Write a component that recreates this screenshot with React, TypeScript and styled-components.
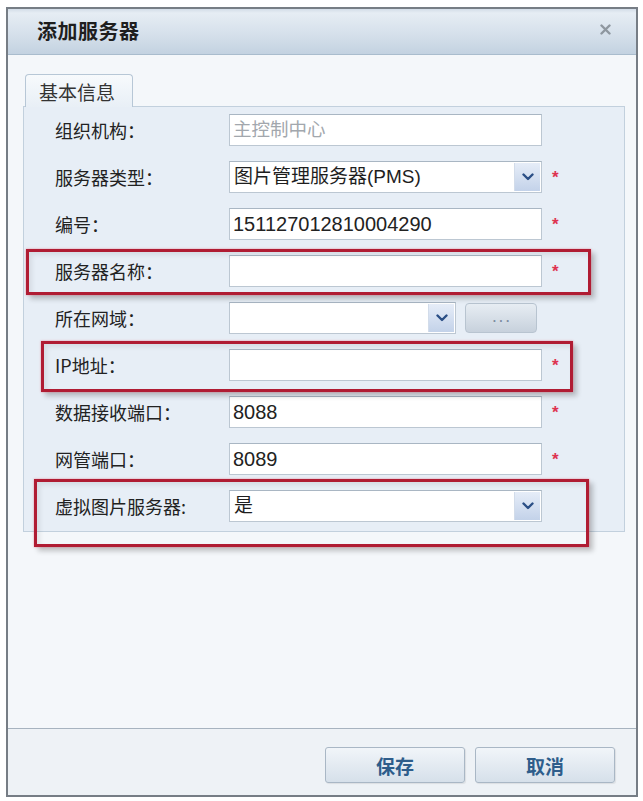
import React from 'react';
import styled, { createGlobalStyle } from 'styled-components';

const GlobalStyle = createGlobalStyle`
  html, body {
    margin: 0;
    padding: 0;
    background: #ffffff;
  }
  body {
    font-family: "Noto Sans CJK SC", "Liberation Sans", sans-serif;
  }
`;

type FieldRow = {
  label: string;
  kind: 'text' | 'select' | 'domain';
  value?: string;
  muted?: boolean;
  required?: boolean;
};

const rows: FieldRow[] = [
  { label: '组织机构：', kind: 'text', value: '主控制中心', muted: true },
  { label: '服务器类型：', kind: 'select', value: '图片管理服务器(PMS)', required: true },
  { label: '编号：', kind: 'text', value: '151127012810004290', required: true },
  { label: '服务器名称：', kind: 'text', value: '', required: true },
  { label: '所在网域：', kind: 'domain', value: '' },
  { label: 'IP地址：', kind: 'text', value: '', required: true },
  { label: '数据接收端口：', kind: 'text', value: '8088', required: true },
  { label: '网管端口：', kind: 'text', value: '8089', required: true },
  { label: '虚拟图片服务器:', kind: 'select', value: '是' },
];

// 红色标注框（相对对话框定位）
const marks = [
  { left: 18, top: 240, width: 565, height: 46 },
  { left: 33, top: 332, width: 532, height: 51 },
  { left: 26, top: 470, width: 555, height: 68 },
];

const Chevron = () => (
  <svg width="12" height="8" viewBox="0 0 12 8">
    <path d="M1.5 1.5 L6 6 L10.5 1.5" fill="none" stroke="#2b4f86" strokeWidth="2.4" strokeLinecap="round" strokeLinejoin="round" />
  </svg>
);

const CloseIcon = () => (
  <svg width="11" height="11" viewBox="0 0 11 11">
    <path d="M1.5 1.5 L9.5 9.5 M9.5 1.5 L1.5 9.5" stroke="#8e979f" strokeWidth="2.4" strokeLinecap="round" />
  </svg>
);

const App: React.FC = () => {
  return (
    <>
      <GlobalStyle />
      <Dialog>
        <TitleBar>
          <Title>添加服务器</Title>
          <CloseButton>
            <CloseIcon />
          </CloseButton>
        </TitleBar>

        <Body>
          <Tab>基本信息</Tab>
          <Panel>
            {rows.map((row) => (
              <Row key={row.label}>
                <Label>{row.label}</Label>
                {row.kind === 'text' && (
                  <Input muted={row.muted}>{row.value}</Input>
                )}
                {row.kind === 'select' && (
                  <Select width={313}>
                    <SelectValue>{row.value}</SelectValue>
                    <ArrowBox>
                      <Chevron />
                    </ArrowBox>
                  </Select>
                )}
                {row.kind === 'domain' && (
                  <>
                    <Select width={227}>
                      <SelectValue />
                      <ArrowBox>
                        <Chevron />
                      </ArrowBox>
                    </Select>
                    <MoreButton>. . .</MoreButton>
                  </>
                )}
                {row.required && <Star>*</Star>}
              </Row>
            ))}
          </Panel>
        </Body>

        <Footer>
          <Button>保存</Button>
          <Button>取消</Button>
        </Footer>

        {marks.map((m, i) => (
          <Mark
            key={i}
            style={{ left: m.left, top: m.top, width: m.width, height: m.height }}
          />
        ))}
      </Dialog>
    </>
  );
};

export default App;

// styled-components
const Dialog = styled.div`
  position: relative;
  box-sizing: border-box;
  margin: 7px 5px 0 6px;
  height: 790px;
  border: 2px solid #767d85;
  background: #f4f7fa;
  display: flex;
  flex-direction: column;
`;

const TitleBar = styled.div`
  box-sizing: border-box;
  height: 46px;
  flex: none;
  display: flex;
  align-items: center;
  justify-content: space-between;
  padding: 0 24px 2px 29px;
  background: linear-gradient(#d3dde8 0px, #e6edf4 4px, #d4dfea 60%, #c3d2e1 100%);
  border-bottom: 1px solid #a9bccd;
`;

const Title = styled.div`
  font-size: 20px;
  font-weight: 700;
  color: #1e1e1e;
  letter-spacing: 0.5px;
`;

const CloseButton = styled.div`
  display: flex;
  align-items: center;
  justify-content: center;
  width: 14px;
  height: 14px;
  margin-top: -2px;
`;

const Body = styled.div`
  flex: 1;
  padding: 19px 11px 0 15px;
  display: flex;
  flex-direction: column;
  align-items: flex-start;
`;

const Tab = styled.div`
  box-sizing: border-box;
  position: relative;
  z-index: 1;
  width: 108px;
  height: 33px;
  margin-left: 2px;
  margin-bottom: -1px;
  padding: 2px 0 0 13px;
  border: 1px solid #b7c7d6;
  border-bottom: none;
  border-radius: 4px 4px 0 0;
  background: linear-gradient(#f7fafc, #e8eff6);
  font-size: 19px;
  line-height: 30px;
  color: #333;
`;

const Panel = styled.div`
  box-sizing: border-box;
  align-self: stretch;
  height: 426px;
  padding: 7px 0 0 31px;
  border: 1px solid #c2d0dd;
  background: #e7eef6;
  display: flex;
  flex-direction: column;
  gap: 15px;
`;

const Row = styled.div`
  display: flex;
  align-items: center;
  height: 32px;
`;

const Label = styled.div`
  width: 174px;
  flex: none;
  font-size: 18px;
  color: #222;
`;

const Input = styled.div<{ muted?: boolean }>`
  box-sizing: border-box;
  width: 313px;
  height: 32px;
  padding: 0 3px;
  border: 1px solid #bcc7d2;
  border-top-color: #a9b6c3;
  background: #fff;
  font-family: "Liberation Sans", "Noto Sans CJK SC", sans-serif;
  font-size: ${(p) => (p.muted ? '18.5px' : '20px')};
  line-height: 30px;
  color: ${(p) => (p.muted ? '#a2a7ad' : '#222')};
`;

const Select = styled.div<{ width: number }>`
  box-sizing: border-box;
  width: ${(p) => p.width}px;
  height: 32px;
  border: 1px solid #bcc7d2;
  border-top-color: #a9b6c3;
  background: #fff;
  display: flex;
  align-items: stretch;
`;

const SelectValue = styled.div`
  flex: 1;
  padding: 0 4px;
  font-family: "Liberation Sans", "Noto Sans CJK SC", sans-serif;
  font-size: 19px;
  line-height: 30px;
  color: #1e1e1e;
`;

const ArrowBox = styled.div`
  width: 25px;
  margin: 1px;
  display: flex;
  align-items: center;
  justify-content: center;
  background: linear-gradient(#e6edf8, #c3d2e9);
  border-left: 1px solid #d2dcea;
`;

const MoreButton = styled.div`
  box-sizing: border-box;
  width: 72px;
  height: 30px;
  margin-left: 9px;
  border: 1px solid #b8c4d0;
  border-radius: 4px;
  background: linear-gradient(#e7edf3, #c7d1dc);
  display: flex;
  align-items: center;
  justify-content: center;
  font-family: "Liberation Sans", sans-serif;
  font-size: 12px;
  font-weight: 700;
  color: #7d8ca0;
`;

const Star = styled.span`
  margin-left: 10px;
  font-family: "Liberation Sans", sans-serif;
  font-size: 17px;
  font-weight: 700;
  color: #de3350;
  line-height: 1;
`;

const Footer = styled.div`
  box-sizing: border-box;
  height: 67px;
  flex: none;
  border-top: 1px solid #a7b3bf;
  background: #eef2f6;
  display: flex;
  justify-content: flex-end;
  align-items: flex-start;
  gap: 10px;
  padding: 18px 21px 0 0;
`;

const Button = styled.div`
  box-sizing: border-box;
  width: 140px;
  height: 36px;
  border: 1px solid #a9b7c5;
  border-radius: 3px;
  background: linear-gradient(#f1f5f9, #d6e0ea);
  box-shadow: 1px 1px 1px rgba(0, 0, 0, 0.08);
  display: flex;
  align-items: center;
  justify-content: center;
  font-size: 19px;
  font-weight: 700;
  color: #2e5d8b;
`;

const Mark = styled.div`
  position: absolute;
  box-sizing: border-box;
  border: 3px solid #b01c33;
  box-shadow: 0 0 2px rgba(230, 90, 110, 0.6), 4px 4px 5px rgba(0, 0, 0, 0.22),
    inset 3px 3px 5px rgba(0, 0, 0, 0.08);
  pointer-events: none;
`;
